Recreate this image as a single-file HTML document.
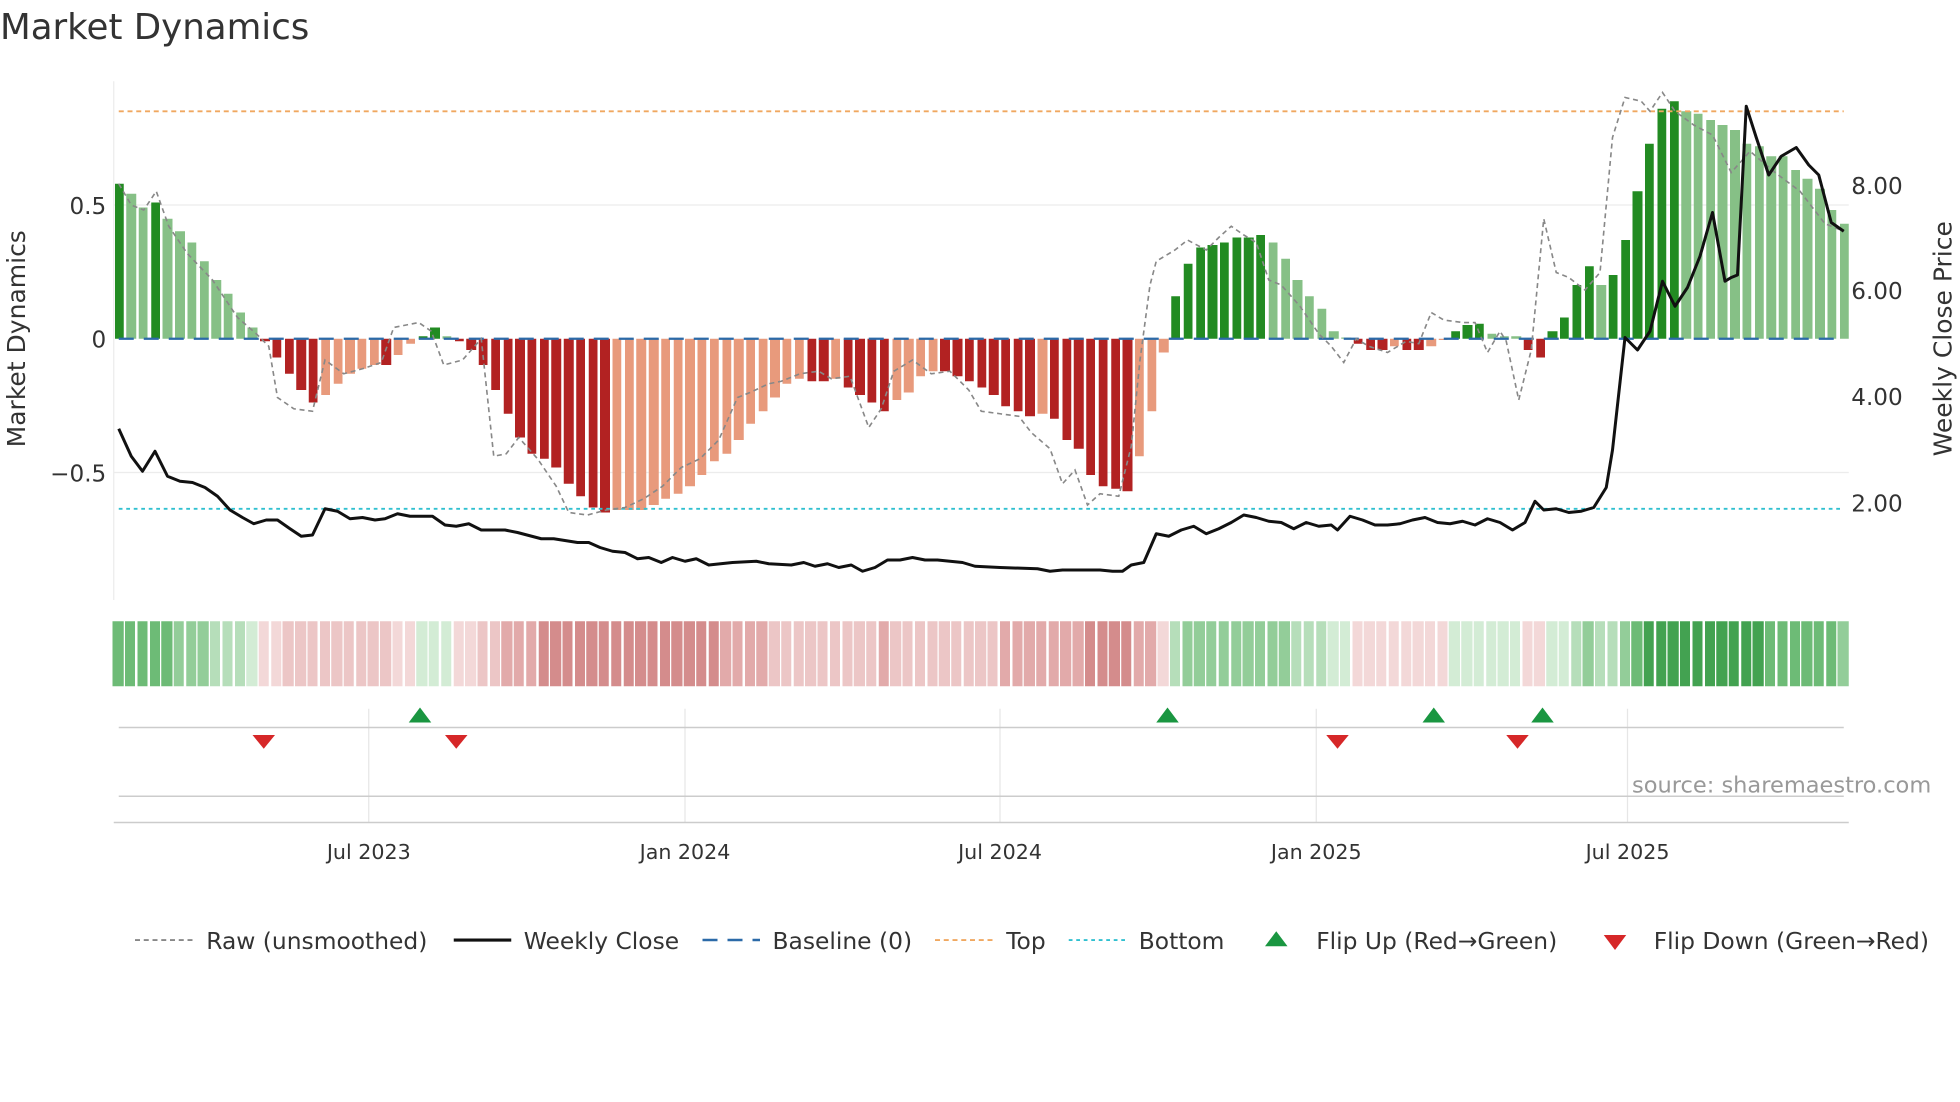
<!DOCTYPE html>
<html><head><meta charset="utf-8"><style>
html,body{margin:0;padding:0;background:#fff;overflow:hidden;}
#w{position:relative;width:1568px;height:882px;transform:scale(1.25);transform-origin:0 0;}
svg{position:absolute;left:0;top:0;font-family:"DejaVu Sans","Liberation Sans",sans-serif;}
#bars{position:absolute;left:90.4px;top:65px;width:1389.6px;height:484px;display:flex;}
#bars i{flex:1;position:relative;display:block;}
#bars i::before{content:"";position:absolute;left:1.2px;right:1.2px;top:calc(206px - max(var(--v)*214px,0px));height:max(var(--v)*214px,var(--v)*-214px);background:var(--c);}
#bars i::after{content:"";position:absolute;left:0;right:1.4px;top:432px;height:52px;background:var(--h);}
.a{--c:#228b22}.b{--c:#86c086}.c{--c:#b22222}.d{--c:#e89a7c}
.g1{--h:#d3ecd5}.g2{--h:#b6deba}.g3{--h:#93cd99}.g4{--h:#6dbb76}.g5{--h:#43a251}
.r1{--h:#f3d8d8}.r2{--h:#ecc6c6}.r3{--h:#e2aaaa}.r4{--h:#d48c8c}
</style></head><body><div id="w">
<svg width="1568" height="882" viewBox="0 0 1568 882" xmlns="http://www.w3.org/2000/svg">
<rect width="1568" height="882" fill="#fff"/>
<text x="0" y="31" font-size="28.5" fill="#333">Market Dynamics</text>
<g stroke="#ececec" stroke-width="1">
<line x1="91" y1="164" x2="1479" y2="164"/><line x1="91" y1="378" x2="1479" y2="378"/>
<line x1="91" y1="65" x2="91" y2="480"/>
</g>
<g stroke="#e6e6e6" stroke-width="1">
<line x1="295" y1="567" x2="295" y2="658"/><line x1="548" y1="567" x2="548" y2="658"/>
<line x1="800" y1="567" x2="800" y2="658"/><line x1="1053" y1="567" x2="1053" y2="658"/>
<line x1="1302" y1="567" x2="1302" y2="658"/>
</g>
<line x1="95" y1="582" x2="1475" y2="582" stroke="#ccc" stroke-width="1.2"/>
<line x1="95" y1="637" x2="1475" y2="637" stroke="#ccc" stroke-width="1.2"/>
<line x1="91" y1="658" x2="1479" y2="658" stroke="#ccc" stroke-width="1.2"/>
<g fill="#1a9641">
<polygon points="327,578 345,578 336,566"/><polygon points="925,578 943,578 934,566"/>
<polygon points="1138,578 1156,578 1147,566"/><polygon points="1225,578 1243,578 1234,566"/>
</g>
<g fill="#d62728">
<polygon points="202,588 220,588 211,599"/><polygon points="356,588 374,588 365,599"/>
<polygon points="1061,588 1079,588 1070,599"/><polygon points="1205,588 1223,588 1214,599"/>
</g>
<text x="1545" y="634" font-size="18" fill="#999" text-anchor="end">source: sharemaestro.com</text>
<g font-size="16.5" fill="#333" text-anchor="middle">
<text x="295" y="687">Jul 2023</text><text x="548" y="687">Jan 2024</text>
<text x="800" y="687">Jul 2024</text><text x="1053" y="687">Jan 2025</text>
<text x="1302" y="687">Jul 2025</text>
</g>
<g font-size="18.7" fill="#333">
<line x1="108" y1="752" x2="154" y2="752" stroke="#888" stroke-width="1.5" stroke-dasharray="4,3"/>
<text x="165" y="759">Raw (unsmoothed)</text>
<line x1="363" y1="752" x2="409" y2="752" stroke="#111" stroke-width="2.5"/>
<text x="419" y="759">Weekly Close</text>
<line x1="562" y1="752" x2="608" y2="752" stroke="#2b6aa8" stroke-width="2" stroke-dasharray="12,8"/>
<text x="618" y="759">Baseline (0)</text>
<line x1="748" y1="752" x2="794" y2="752" stroke="#f0a860" stroke-width="1.5" stroke-dasharray="4,3"/>
<text x="805" y="759">Top</text>
<line x1="855" y1="752" x2="901" y2="752" stroke="#30c0d0" stroke-width="1.5" stroke-dasharray="3,3"/>
<text x="911" y="759">Bottom</text>
<polygon points="1012,757 1030,757 1021,745" fill="#1a9641"/>
<text x="1053" y="759">Flip Up (Red→Green)</text>
<polygon points="1283,748 1301,748 1292,760" fill="#d62728"/>
<text x="1323" y="759">Flip Down (Green→Red)</text>
</g>
<g font-size="18.5" fill="#333">
<text x="85" y="171" text-anchor="end">0.5</text>
<text x="85" y="278" text-anchor="end">0</text>
<text x="85" y="385" text-anchor="end">−0.5</text>
<text x="1481" y="155">8.00</text>
<text x="1481" y="239">6.00</text>
<text x="1481" y="324">4.00</text>
<text x="1481" y="409">2.00</text>
<text transform="translate(20,271) rotate(-90)" text-anchor="middle" font-size="20">Market Dynamics</text>
<text transform="translate(1561,271) rotate(-90)" text-anchor="middle" font-size="20">Weekly Close Price</text>
</g>
</svg>
<div id="bars">
<i class="a g4" style="--v:.58"></i><i class="b g4" style="--v:.54"></i><i class="b g4" style="--v:.49"></i><i class="a g4" style="--v:.51"></i><i class="b g4" style="--v:.45"></i><i class="b g3" style="--v:.40"></i><i class="b g3" style="--v:.36"></i><i class="b g3" style="--v:.29"></i><i class="b g2" style="--v:.22"></i><i class="b g2" style="--v:.17"></i><i class="b g2" style="--v:.10"></i><i class="b g1" style="--v:.04"></i>
<i class="c r1" style="--v:-.01"></i><i class="c r1" style="--v:-.07"></i><i class="c r2" style="--v:-.13"></i><i class="c r2" style="--v:-.19"></i><i class="c r2" style="--v:-.24"></i><i class="d r2" style="--v:-.21"></i><i class="d r2" style="--v:-.17"></i><i class="d r2" style="--v:-.13"></i><i class="d r2" style="--v:-.11"></i><i class="d r2" style="--v:-.10"></i><i class="c r2" style="--v:-.10"></i><i class="d r1" style="--v:-.06"></i><i class="d r1" style="--v:-.02"></i>
<i class="a g1" style="--v:.01"></i><i class="a g1" style="--v:.04"></i><i class="b g1" style="--v:.01"></i>
<i class="c r1" style="--v:-.01"></i><i class="c r1" style="--v:-.04"></i><i class="c r2" style="--v:-.10"></i><i class="c r2" style="--v:-.19"></i><i class="c r3" style="--v:-.28"></i><i class="c r3" style="--v:-.37"></i><i class="c r3" style="--v:-.43"></i><i class="c r4" style="--v:-.45"></i><i class="c r4" style="--v:-.48"></i><i class="c r4" style="--v:-.54"></i><i class="c r4" style="--v:-.59"></i><i class="c r4" style="--v:-.63"></i><i class="c r4" style="--v:-.65"></i>
<i class="d r4" style="--v:-.64"></i><i class="d r4" style="--v:-.64"></i><i class="d r4" style="--v:-.64"></i><i class="d r4" style="--v:-.62"></i><i class="d r4" style="--v:-.60"></i><i class="d r4" style="--v:-.58"></i><i class="d r4" style="--v:-.55"></i><i class="d r4" style="--v:-.51"></i><i class="d r4" style="--v:-.46"></i><i class="d r3" style="--v:-.43"></i><i class="d r3" style="--v:-.38"></i><i class="d r3" style="--v:-.32"></i><i class="d r3" style="--v:-.27"></i><i class="d r2" style="--v:-.22"></i><i class="d r2" style="--v:-.17"></i><i class="d r2" style="--v:-.15"></i>
<i class="c r2" style="--v:-.16"></i><i class="c r2" style="--v:-.16"></i><i class="d r2" style="--v:-.15"></i><i class="c r2" style="--v:-.18"></i><i class="c r2" style="--v:-.21"></i><i class="c r2" style="--v:-.24"></i><i class="c r3" style="--v:-.27"></i><i class="d r2" style="--v:-.23"></i><i class="d r2" style="--v:-.20"></i><i class="d r2" style="--v:-.14"></i><i class="d r2" style="--v:-.12"></i>
<i class="c r2" style="--v:-.12"></i><i class="c r2" style="--v:-.14"></i><i class="c r2" style="--v:-.16"></i><i class="c r2" style="--v:-.18"></i><i class="c r2" style="--v:-.21"></i><i class="c r3" style="--v:-.25"></i><i class="c r3" style="--v:-.27"></i><i class="c r3" style="--v:-.29"></i><i class="d r3" style="--v:-.28"></i><i class="c r3" style="--v:-.30"></i><i class="c r3" style="--v:-.38"></i><i class="c r3" style="--v:-.41"></i><i class="c r4" style="--v:-.51"></i><i class="c r4" style="--v:-.55"></i><i class="c r4" style="--v:-.56"></i><i class="c r4" style="--v:-.57"></i><i class="d r3" style="--v:-.44"></i><i class="d r3" style="--v:-.27"></i><i class="d r1" style="--v:-.05"></i>
<i class="a g2" style="--v:.16"></i><i class="a g3" style="--v:.28"></i><i class="a g3" style="--v:.34"></i><i class="a g3" style="--v:.35"></i><i class="a g3" style="--v:.36"></i><i class="a g3" style="--v:.38"></i><i class="a g3" style="--v:.38"></i><i class="a g3" style="--v:.39"></i>
<i class="b g3" style="--v:.36"></i><i class="b g3" style="--v:.30"></i><i class="b g2" style="--v:.22"></i><i class="b g2" style="--v:.16"></i><i class="b g2" style="--v:.11"></i><i class="b g1" style="--v:.03"></i><i class="b g1" style="--v:.005"></i>
<i class="c r1" style="--v:-.02"></i><i class="c r1" style="--v:-.04"></i><i class="c r1" style="--v:-.04"></i><i class="d r1" style="--v:-.03"></i><i class="c r1" style="--v:-.04"></i><i class="c r1" style="--v:-.04"></i><i class="d r1" style="--v:-.03"></i><i class="d r1" style="--v:-.005"></i>
<i class="a g1" style="--v:.03"></i><i class="a g1" style="--v:.05"></i><i class="a g1" style="--v:.055"></i><i class="b g1" style="--v:.02"></i><i class="b g1" style="--v:.01"></i><i class="b g1" style="--v:.01"></i>
<i class="c r1" style="--v:-.04"></i><i class="c r1" style="--v:-.07"></i>
<i class="a g1" style="--v:.03"></i><i class="a g1" style="--v:.08"></i><i class="a g2" style="--v:.20"></i><i class="a g3" style="--v:.27"></i><i class="b g2" style="--v:.20"></i><i class="a g2" style="--v:.24"></i><i class="a g3" style="--v:.37"></i><i class="a g4" style="--v:.55"></i><i class="a g5" style="--v:.73"></i><i class="a g5" style="--v:.86"></i><i class="a g5" style="--v:.89"></i>
<i class="b g5" style="--v:.85"></i><i class="b g5" style="--v:.84"></i><i class="b g5" style="--v:.82"></i><i class="b g5" style="--v:.80"></i><i class="b g5" style="--v:.78"></i><i class="b g5" style="--v:.73"></i><i class="b g5" style="--v:.72"></i><i class="b g4" style="--v:.68"></i><i class="b g4" style="--v:.68"></i><i class="b g4" style="--v:.63"></i><i class="b g4" style="--v:.60"></i><i class="b g4" style="--v:.56"></i><i class="b g4" style="--v:.48"></i><i class="b g3" style="--v:.43"></i>
</div>
<svg width="1568" height="882" viewBox="0 0 1568 882" xmlns="http://www.w3.org/2000/svg" style="background:transparent">
<line x1="95" y1="89" x2="1475" y2="89" stroke="#f0a860" stroke-width="1.5" stroke-dasharray="4,3"/>
<line x1="95" y1="407" x2="1475" y2="407" stroke="#30c0d0" stroke-width="1.5" stroke-dasharray="3,3"/>
<line x1="95" y1="271" x2="1475" y2="271" stroke="#2b6aa8" stroke-width="1.8" stroke-dasharray="12,8"/>
<polyline fill="none" stroke="#888" stroke-width="1.3" stroke-dasharray="4,3" points="95,147 105,164 115,168 125,153 135,181 150,203 170,224 190,254 205,267 215,277 222,318 235,327 250,329 260,288 275,299 290,295 305,290 315,262 335,258 345,265 355,292 370,288 385,271 395,365 405,363 415,350 430,367 445,389 455,410 470,412 485,408 500,406 515,399 530,389 545,374 560,367 575,352 590,318 600,314 615,307 625,305 640,299 655,297 665,303 680,301 695,342 705,327 715,297 730,288 745,299 760,297 775,312 785,329 800,331 815,333 825,346 840,359 850,387 860,376 870,404 880,395 895,397 905,357 912,288 920,228 925,209 940,200 950,192 965,200 975,190 985,181 995,188 1005,194 1015,224 1025,228 1040,245 1055,267 1065,277 1075,290 1085,271 1095,277 1110,282 1125,273 1135,275 1145,250 1155,256 1170,258 1180,258 1190,282 1200,265 1205,273 1215,320 1225,280 1235,175 1245,218 1255,222 1268,232 1280,218 1290,110 1300,78 1313,81 1320,89 1330,74 1340,89 1355,100 1370,108 1385,138 1400,121 1420,138 1440,153 1460,179 1475,185"/>
<polyline fill="none" stroke="#111" stroke-width="2.4" stroke-linejoin="round" points="95,343 105,365 114,377 124,361 134,381 144,385 154,386 164,390 174,397 184,408 194,414 203,419 213,416 222,416 232,423 241,429 250,428 260,407 270,409 280,415 290,414 300,416 308,415 318,411 328,413 346,413 356,420 365,421 375,419 385,424 404,424 414,426 433,431 443,431 462,434 471,434 480,438 490,441 500,442 510,447 519,446 529,450 538,446 548,449 557,447 567,452 586,450 605,449 615,451 633,452 643,450 652,453 662,451 671,454 681,452 690,457 700,454 710,448 720,448 730,446 740,448 750,448 760,449 770,450 780,453 800,454 830,455 840,457 850,456 860,456 880,456 890,457 898,457 905,452 915,450 925,427 935,429 945,424 955,421 965,427 975,423 985,418 995,412 1005,414 1015,417 1025,418 1035,423 1045,418 1055,421 1065,420 1070,424 1080,413 1090,416 1100,420 1110,420 1120,419 1130,416 1140,414 1150,418 1160,419 1170,417 1180,420 1190,415 1200,418 1210,424 1220,418 1228,401 1235,408 1245,407 1255,410 1265,409 1275,406 1285,390 1290,360 1300,270 1310,280 1320,265 1330,225 1340,245 1350,230 1360,205 1370,170 1380,225 1385,222 1390,220 1397,85 1405,110 1415,140 1425,125 1437,118 1447,132 1455,140 1465,178 1475,185"/>
</svg>
</div>
</body></html>
